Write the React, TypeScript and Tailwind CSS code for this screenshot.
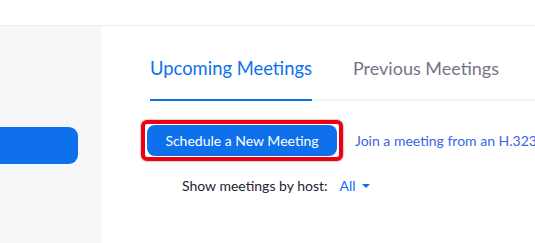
import React from "react";

export default function App() {
  return (
    <div
      className="w-[535px] h-[243px] bg-white overflow-hidden flex flex-col"
      style={{ fontFamily: "Lato, 'Open Sans', sans-serif" }}
    >
      <div className="h-[26px] shrink-0 border-b border-[#ececf0]" />
      <div className="flex flex-1">
        <div className="w-[101px] shrink-0 bg-[#f7f7fa] pt-[101px]">
          <div className="w-[78px] h-[37px] bg-[#0e71eb] rounded-r-[9px]" />
        </div>
        <div className="flex-1 min-w-0 pl-[49px] overflow-hidden">
          <div className="flex gap-[41px] pt-[30px] border-b-2 border-[#f2f2f5]">
            <div className="pb-[19px] -mb-[2px] border-b-2 border-[#0e71eb] text-[18.4px] leading-[24px] text-[#0e71eb] whitespace-nowrap">
              Upcoming Meetings
            </div>
            <div className="pb-[19px] -mb-[2px] border-b-2 border-transparent text-[18px] leading-[24px] text-[#747487] whitespace-nowrap">
              Previous Meetings
            </div>
          </div>
          <div className="flex items-center mt-[19px] -ml-[9px]">
            <div className="shrink-0 border-4 border-[#ee0010] rounded-[6px] px-[2px] py-px shadow-[0_0_2px_rgba(0,0,0,0.6)]">
              <button className="w-[190px] h-[31px] rounded-[8px] bg-[#0e71eb] text-white text-[14px] leading-[20px] flex items-center justify-center">
                Schedule a New Meeting
              </button>
            </div>
            <span className="ml-[12px] text-[14px] leading-[20px] text-[#3b63ea] whitespace-nowrap">
              Join a meeting from an H.323/SIP room system
            </span>
          </div>
          <div className="flex items-center mt-[15px] ml-[32px] text-[14px] leading-[20px]">
            <span className="text-[#232333]">Show meetings by host:</span>
            <span className="ml-[12px] text-[#0e71eb]">All</span>
            <span className="ml-[6px] w-0 h-0 border-l-[4px] border-r-[4px] border-t-[4px] border-l-transparent border-r-transparent border-t-[#0e71eb]" />
          </div>
        </div>
      </div>
    </div>
  );
}
